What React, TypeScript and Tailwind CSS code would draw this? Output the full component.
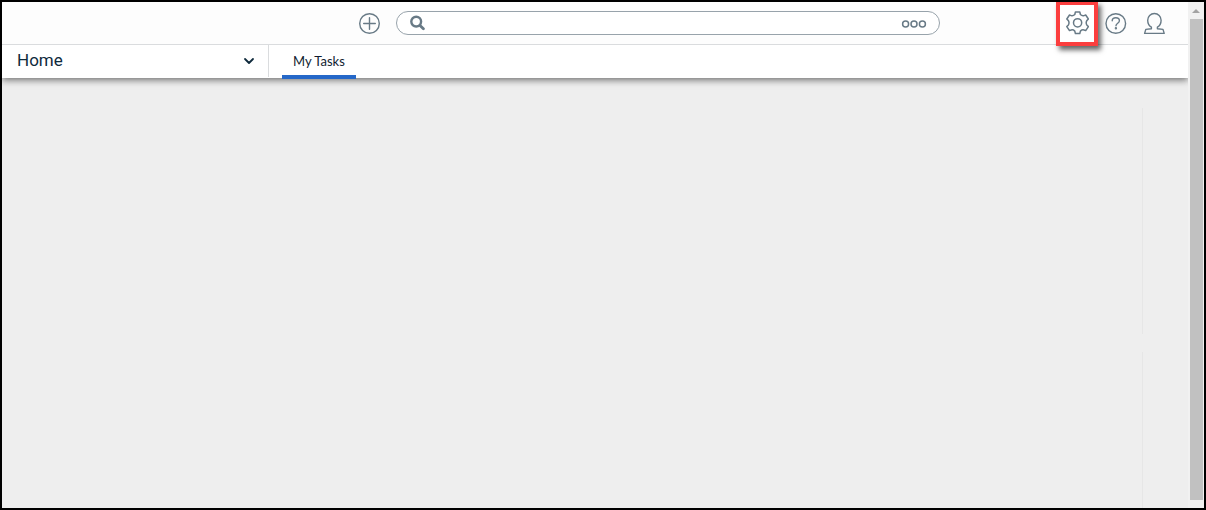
import React from "react";

const iconProps = {
  fill: "none",
  stroke: "currentColor",
  strokeLinecap: "round",
  strokeLinejoin: "round",
} as const;

const PlusCircleIcon = () => (
  <svg {...iconProps} viewBox="0 0 22 22" strokeWidth="1.4" className="size-[22px]">
    <circle cx="11.5" cy="11.5" r="9.8" />
    <path d="M11.5 5.7v11.6M5.7 11.5h11.6" />
  </svg>
);

const SearchIcon = () => (
  <svg {...iconProps} viewBox="0 0 16 16" strokeWidth="2.4" className="size-4 shrink-0">
    <circle cx="7.2" cy="6.6" r="4.9" />
    <path d="M11 10.4l3.4 3.4" strokeWidth="2.8" />
  </svg>
);

const MoreIcon = () => (
  <svg {...iconProps} viewBox="0 0 26 10" strokeWidth="1.5" className="h-[10px] w-[26px]">
    <circle cx="4.6" cy="6" r="3" />
    <circle cx="13" cy="6" r="3" />
    <circle cx="21.4" cy="6" r="3" />
  </svg>
);

const GearIcon = () => (
  <svg {...iconProps} viewBox="0 0 24 24" strokeWidth="1.5" className="size-6">
    <circle cx="12.6" cy="11.8" r="4.1" />
    <path d="M10.4 1h4.4l.6 2.5q1.7 1.700 3.600 1.100l1.700-.6 2.700 4-1.600 1.600q-1.200 2.200 0 4.400l1.600 1.600-2.700 4-1.700-.6q-1.900-.6-3.600 1.100l-.6 2.500h-4.400l-.6-2.500q-1.700-1.700-3.600-1.100l-1.700.6-2.700-4 1.600-1.600q1.200-2.200 0-4.400L1.800 8l2.700-4 1.700.6q1.900.6 3.600-1.100z" />
  </svg>
);

const HelpIcon = () => (
  <svg {...iconProps} viewBox="0 0 22 22" strokeWidth="1.4" className="size-[22px]">
    <circle cx="10.8" cy="11.5" r="9.8" />
    <path d="M7.2 8.8c.1-2 1.6-3.1 3.6-3.1s3.6 1.2 3.600 3c0 2.500-3.400 2.500-3.400 5" />
    <circle cx="10.9" cy="16.3" r=".5" fill="currentColor" />
  </svg>
);

const UserIcon = () => (
  <svg {...iconProps} viewBox="0 0 22 22" strokeWidth="1.4" className="size-[22px]">
    <path d="M8.4 15.2C6 13.800 4.700 11.200 4.700 8.200 4.700 4.300 7.600 1.500 11.400 1.500s6.700 2.800 6.700 6.700c0 3-1.300 5.600-3.700 7v1.600l5.600.6 1.200 4H1.600l1.200-4 5.600-.6z" />
  </svg>
);

const ChevronIcon = () => (
  <svg {...iconProps} viewBox="0 0 12 8" strokeWidth="1.8" className="h-2 w-3">
    <path d="M2 2l4 4 4-4" />
  </svg>
);

const TopBar: React.FC = () => (
  <header className="relative z-20 flex h-[43px] items-center border-b border-[#dadcde] bg-[#fdfdfd] text-[#687a86]">
    <div className="flex w-[394px] shrink-0 justify-end pr-4">
      <button type="button" aria-label="Create new">
        <PlusCircleIcon />
      </button>
    </div>
    <div
      role="search"
      className="flex h-6 min-w-0 flex-1 items-center rounded-full border border-[#98a3ab] bg-white px-3"
    >
      <SearchIcon />
      <input
        type="text"
        aria-label="Search"
        className="h-5 min-w-0 flex-1 bg-transparent px-2 text-sm outline-none"
      />
      <button type="button" aria-label="Search options">
        <MoreIcon />
      </button>
    </div>
    <div className="flex w-[248px] shrink-0 items-center justify-end pr-[23px]">
      <button
        type="button"
        aria-label="Settings"
        className="flex h-[45px] w-[42px] shrink-0 items-center justify-center border-4 border-[#fb3e3e] bg-white shadow-[3px_4px_5px_rgba(0,0,0,0.6)]"
      >
        <GearIcon />
      </button>
      <button type="button" aria-label="Help" className="mr-4 ml-[7px]">
        <HelpIcon />
      </button>
      <button type="button" aria-label="Profile">
        <UserIcon />
      </button>
    </div>
  </header>
);

const NavBar: React.FC = () => (
  <nav className="relative flex h-[33px] bg-white text-[#0f2a3c] shadow-[0_2px_7px_rgba(0,0,0,0.55)]">
    <button
      type="button"
      className="flex h-8 w-[267px] items-center justify-between border-r border-[#dadcde] pr-[13px] pl-[15px] font-['Roboto',sans-serif] text-[17px] leading-6"
    >
      <span className="pb-0.5">Home</span>
      <ChevronIcon />
    </button>
    <a
      href="#my-tasks"
      className="ml-[13px] flex h-[34px] items-center border-b-4 border-[#2568c8] px-[11px] pt-0.5 font-['Lato',sans-serif] text-[13px] leading-4 text-[#101c30]"
    >
      My Tasks
    </a>
  </nav>
);

const ScrollRail: React.FC = () => (
  <div aria-hidden="true" className="flex w-4 shrink-0 flex-col items-center bg-[#f1f1f1] pb-2">
    <div className="flex h-[17px] items-center">
      <svg viewBox="0 0 8 4" className="h-1 w-2" fill="#a3a3a3">
        <path d="M0 4l4-4 4 4z" />
      </svg>
    </div>
    <div className="w-[13px] flex-1 bg-[#c1c1c1]" />
  </div>
);

export default function App() {
  return (
    <div className="flex min-h-screen border-2 border-black bg-[#eeeeee]">
      <div className="flex min-w-0 flex-1 flex-col overflow-hidden">
        <div className="relative z-10">
          <TopBar />
          <NavBar />
        </div>
        <main className="flex flex-1 flex-col gap-[18px] pt-[30px] pr-[45px]">
          <section className="h-[226px] border-r border-[#e6e6e6]" />
          <section className="flex-1 border-r border-[#e6e6e6]" />
        </main>
      </div>
      <ScrollRail />
    </div>
  );
}
